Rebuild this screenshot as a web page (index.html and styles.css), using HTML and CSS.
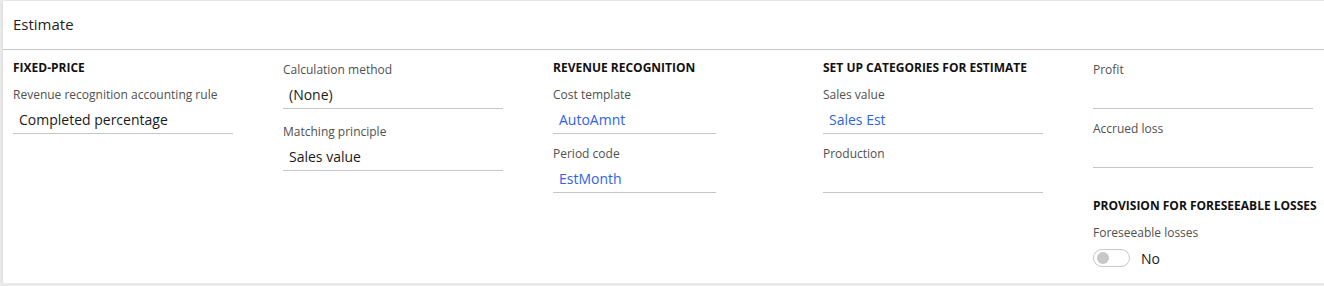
FILE: index.html
```html
<!DOCTYPE html>
<html lang="en">
<head>
    <meta charset="UTF-8">
    <meta name="viewport" content="width=device-width, initial-scale=1.0">
    <title>Estimate</title>
    <link rel="stylesheet" href="styles.css">
</head>
<body>

    <!-- Estimate fast tab -->
    <div class="card">
        <div class="card-header">Estimate</div>

        <div class="card-body">
            <div class="group">
                <div class="group-title">FIXED-PRICE</div>
                <div class="field">
                    <div class="field-label">Revenue recognition accounting rule</div>
                    <div class="field-value">Completed percentage</div>
                </div>
            </div>

            <div class="group no-title wide-fields">
                <div class="field">
                    <div class="field-label">Calculation method</div>
                    <div class="field-value">(None)</div>
                </div>
                <div class="field">
                    <div class="field-label">Matching principle</div>
                    <div class="field-value">Sales value</div>
                </div>
            </div>

            <div class="group">
                <div class="group-title">REVENUE RECOGNITION</div>
                <div class="field narrow">
                    <div class="field-label">Cost template</div>
                    <div class="field-value link">AutoAmnt</div>
                </div>
                <div class="field narrow">
                    <div class="field-label">Period code</div>
                    <div class="field-value link">EstMonth</div>
                </div>
            </div>

            <div class="group">
                <div class="group-title">SET UP CATEGORIES FOR ESTIMATE</div>
                <div class="field">
                    <div class="field-label">Sales value</div>
                    <div class="field-value link">Sales Est</div>
                </div>
                <div class="field">
                    <div class="field-label">Production</div>
                    <div class="field-value"></div>
                </div>
            </div>

            <div class="group no-title">
                <div class="field">
                    <div class="field-label">Profit</div>
                    <div class="field-value"></div>
                </div>
                <div class="field">
                    <div class="field-label">Accrued loss</div>
                    <div class="field-value"></div>
                </div>

                <div class="group-title sub-title">PROVISION FOR FORESEEABLE LOSSES</div>
                <div class="field">
                    <div class="field-label">Foreseeable losses</div>
                    <div class="toggle-row">
                        <span class="toggle"><span class="toggle-knob"></span></span>
                        <span class="toggle-text">No</span>
                    </div>
                </div>
            </div>
        </div>
    </div>

</body>
</html>
```

FILE: styles.css
```css
body {
    font-family: "Segoe UI", "Open Sans", "Noto Sans", Arial, sans-serif;
    margin: 0;
    padding: 1px 0 0 3px;
    background-color: #eaeaea;
    color: #212121;
    overflow: hidden;
}

.card {
    background-color: white;
    height: 282px;
    margin-right: -10px;
    box-shadow: 0 1px 3px rgba(0, 0, 0, 0.12);
}

.card-header {
    height: 44px;
    padding: 1px 10px 3px;
    line-height: 44px;
    font-size: 15px;
    color: #1f1f1f;
    border-bottom: 1px solid #c6c6c6;
}

.card-body {
    display: flex;
    padding: 10px 0 0 10px;
}

.group {
    width: 270px;
    flex-shrink: 0;
}

.group.no-title {
    padding-top: 2px;
}

.group-title {
    font-size: 12px;
    font-weight: bold;
    line-height: 16px;
    color: #111;
    margin-bottom: 11px;
}

.group-title.sub-title {
    margin-top: 30px;
}

.field {
    width: 220px;
    margin-bottom: 12px;
}

.field.narrow {
    width: 163px;
}

.wide-fields .field {
    margin-bottom: 15px;
}

.field-label {
    font-size: 12px;
    line-height: 16px;
    color: #505050;
}

.field-value {
    height: 26px;
    padding: 4px 0 0 6px;
    line-height: 26px;
    font-size: 14px;
    color: #1a1a1a;
    border-bottom: 1px solid #c6c6c6;
}

.field-value.link {
    color: #2f63e8;
}

/* 开关 */
.toggle-row {
    display: flex;
    align-items: center;
    margin-top: 8px;
    height: 18px;
}

.toggle {
    width: 32px;
    height: 16px;
    border: 1px solid #c8c8c8;
    border-radius: 9px;
    display: flex;
    align-items: center;
    padding-left: 3px;
    box-sizing: content-box;
}

.toggle-knob {
    width: 12px;
    height: 12px;
    border-radius: 50%;
    background-color: #c8c8c8;
}

.toggle-text {
    margin-left: 11px;
    font-size: 14px;
    color: #1a1a1a;
}
```
